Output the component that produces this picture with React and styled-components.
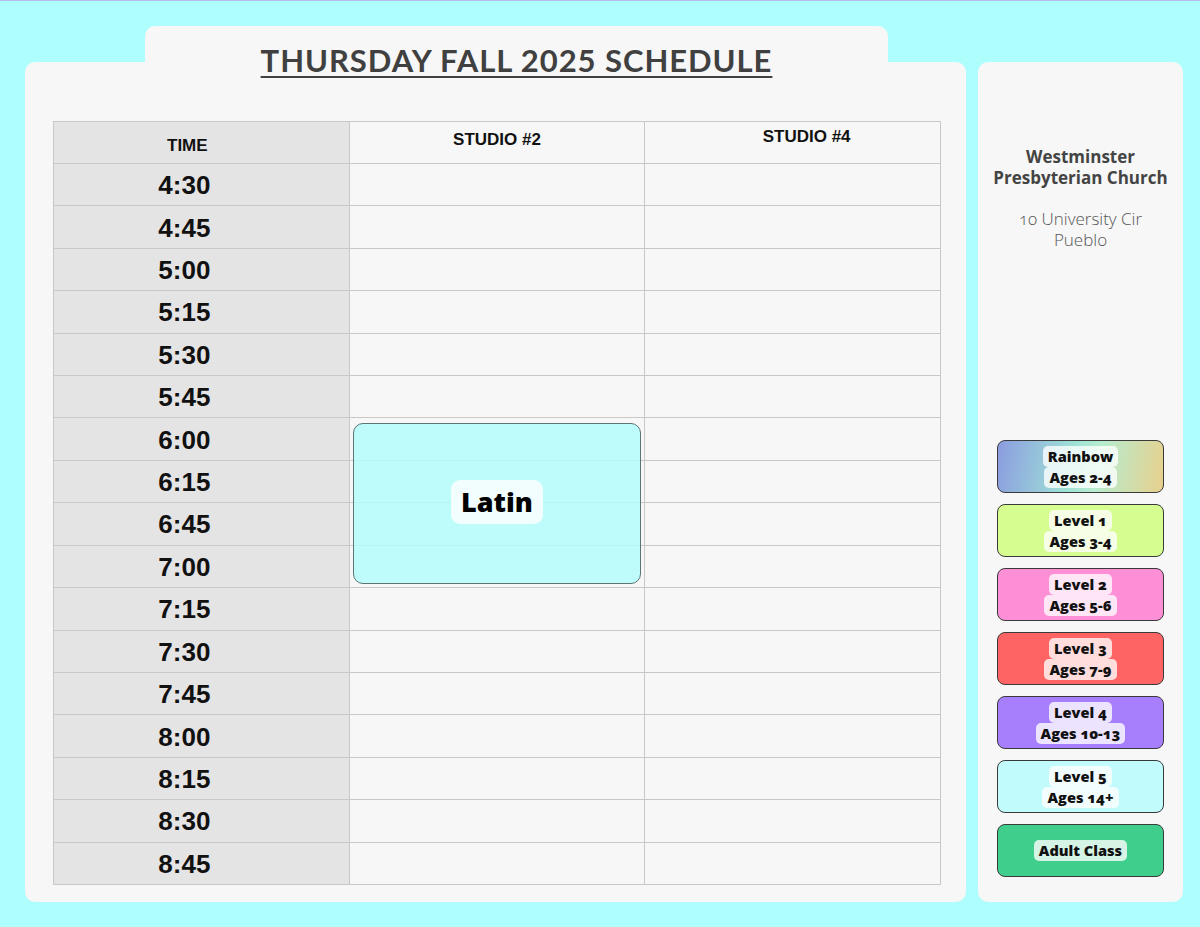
import React from 'react';
import styled, { createGlobalStyle } from 'styled-components';

const GlobalStyle = createGlobalStyle`
    html, body {
        margin: 0;
        padding: 0;
        background: #affefe;
    }
    body {
        border-top: 1px solid #b7b9ee;
        font-family: "Lato", "Liberation Sans", sans-serif;
    }
`

const Page = styled.div`
    display: flex;
    gap: 12px;
    padding: 25px 0 0 25px;
    width: 1200px;
    height: 926px;
    box-sizing: border-box;
`

const Board = styled.div`
    display: flex;
    flex-direction: column;
    width: 941px;
`

const Tab = styled.div`
    position: relative;
    z-index: 1;
    margin-left: 120px;
    width: 743px;
    height: 36px;
    background: #f7f7f7;
    border-radius: 10px 10px 0 0;
    display: flex;
    justify-content: center;
`

const Title = styled.h1`
    margin: 0;
    padding-top: 14px;
    font-family: "Lato", sans-serif;
    font-weight: 700;
    font-size: 31px;
    line-height: 40px;
    letter-spacing: 0.95px;
    color: #404040;
    white-space: nowrap;
    text-decoration: underline;
    text-decoration-thickness: 2px;
    text-underline-offset: 4px;
`

const Panel = styled.div`
    background: #f7f7f7;
    border-radius: 10px;
    height: 840px;
    box-sizing: border-box;
    padding: 59px 25px 17px 28px;
`

const Table = styled.div`
    position: relative;
    display: grid;
    grid-template-columns: repeat(3, 1fr);
    grid-template-rows: 42px repeat(17, 1fr);
    width: 888px;
    height: 764px;
    box-sizing: border-box;
    border-top: 1px solid #c8c8c8;
    border-left: 1px solid #c8c8c8;
`

const Cell = styled.div`
    grid-row: ${props => props.row};
    grid-column: ${props => props.col};
    display: flex;
    justify-content: center;
    align-items: center;
    border-right: 1px solid #c8c8c8;
    border-bottom: 1px solid #c8c8c8;
    background: ${props => props.shaded ? '#e5e4e5' : '#f7f7f7'};
    font-family: "Liberation Sans", Arial, sans-serif;
    font-weight: 700;
    color: #111;
`

const HeadCell = styled(Cell)`
    align-items: flex-start;
    font-size: 17px;
    line-height: 20px;
    padding-top: ${props => props.top}px;
    padding-left: ${props => props.left || 0}px;
    padding-right: ${props => props.right || 0}px;
`

const TimeCell = styled(Cell)`
    font-size: 26px;
    padding-right: 34px;
    padding-top: 2px;
`

const ClassBlock = styled.div`
    grid-row: ${props => props.rows};
    grid-column: ${props => props.col};
    z-index: 1;
    margin: 5px 4px 4px 3px;
    display: flex;
    align-items: center;
    justify-content: center;
    background: rgba(180, 252, 252, 0.86);
    border: 1px solid #5d7474;
    border-radius: 10px;
`

const ClassName = styled.span`
    padding: 0 10px;
    height: 44px;
    line-height: 44px;
    margin-top: -3px;
    background: rgba(255, 255, 255, 0.8);
    border-radius: 9px;
    font-family: "Open Sans", "Lato", sans-serif;
    font-weight: 800;
    font-size: 27px;
    color: #000;
`

const Sidebar = styled.aside`
    margin-top: 36px;
    width: 205px;
    height: 840px;
    box-sizing: border-box;
    background: #f7f7f7;
    border-radius: 10px;
    padding: 84px 19px 25px 19px;
    display: flex;
    flex-direction: column;
    align-items: center;
`

const Venue = styled.div`
    font-family: "Open Sans", sans-serif;
    font-weight: 700;
    font-size: 17px;
    line-height: 21px;
    color: #444;
    text-align: center;
    white-space: nowrap;
`

const Address = styled.div`
    margin-top: 20px;
    font-family: "Open Sans", sans-serif;
    font-weight: 300;
    font-size: 17px;
    line-height: 21px;
    color: #555;
    text-align: center;
    font-variant-numeric: oldstyle-nums;
`

const Legend = styled.div`
    margin-top: auto;
    display: flex;
    flex-direction: column;
    gap: 11px;
    width: 100%;
`

const LegendCard = styled.div`
    height: 53px;
    box-sizing: border-box;
    border: 1px solid #3a3a3a;
    border-radius: 8px;
    background: ${props => props.fill};
    display: flex;
    flex-direction: column;
    align-items: center;
    justify-content: center;
`

const LabelLine = styled.span`
    display: block;
    padding: 0 5px;
    line-height: 21px;
    background: rgba(255, 255, 255, 0.78);
    border-radius: 5px;
    font-family: "Open Sans", "Lato", sans-serif;
    font-weight: 800;
    font-size: 14.6px;
    color: #111;
    font-variant-numeric: oldstyle-nums;
    white-space: nowrap;
`

const times = [
    '4:30', '4:45', '5:00', '5:15', '5:30', '5:45', '6:00', '6:15', '6:45',
    '7:00', '7:15', '7:30', '7:45', '8:00', '8:15', '8:30', '8:45'
];

const legend = [
    { lines: ['Rainbow', 'Ages 2-4'], fill: 'linear-gradient(100deg, #8b9ce0 0%, #9fe3d6 45%, #b6ecd0 60%, #e8d08c 100%)' },
    { lines: ['Level 1', 'Ages 3-4'], fill: '#d5fd8f' },
    { lines: ['Level 2', 'Ages 5-6'], fill: '#fd8fd6' },
    { lines: ['Level 3', 'Ages 7-9'], fill: '#fe6464' },
    { lines: ['Level 4', 'Ages 10-13'], fill: '#a77ffd' },
    { lines: ['Level 5', 'Ages 14+'], fill: '#c2fbfb' },
    { lines: ['Adult Class'], fill: '#3fce8c' },
];

export default function App() {
    return (
        <>
            <GlobalStyle />
            <Page>
                <Board>
                    <Tab>
                        <Title>THURSDAY FALL 2025 SCHEDULE</Title>
                    </Tab>
                    <Panel>
                        <Table>
                            <HeadCell row={1} col={1} shaded top={14} right={28}>TIME</HeadCell>
                            <HeadCell row={1} col={2} top={8}>STUDIO #2</HeadCell>
                            <HeadCell row={1} col={3} top={5} left={28}>STUDIO #4</HeadCell>
                            {times.map((time, i) => (
                                <React.Fragment key={time}>
                                    <TimeCell row={i + 2} col={1} shaded>{time}</TimeCell>
                                    <Cell row={i + 2} col={2} />
                                    <Cell row={i + 2} col={3} />
                                </React.Fragment>
                            ))}
                            <ClassBlock rows="8 / 12" col={2}>
                                <ClassName>Latin</ClassName>
                            </ClassBlock>
                        </Table>
                    </Panel>
                </Board>
                <Sidebar>
                    <Venue>Westminster<br />Presbyterian Church</Venue>
                    <Address>10 University Cir<br />Pueblo</Address>
                    <Legend>
                        {legend.map(item => (
                            <LegendCard key={item.lines[0]} fill={item.fill}>
                                {item.lines.map(line => (
                                    <LabelLine key={line}>{line}</LabelLine>
                                ))}
                            </LegendCard>
                        ))}
                    </Legend>
                </Sidebar>
            </Page>
        </>
    )
}
